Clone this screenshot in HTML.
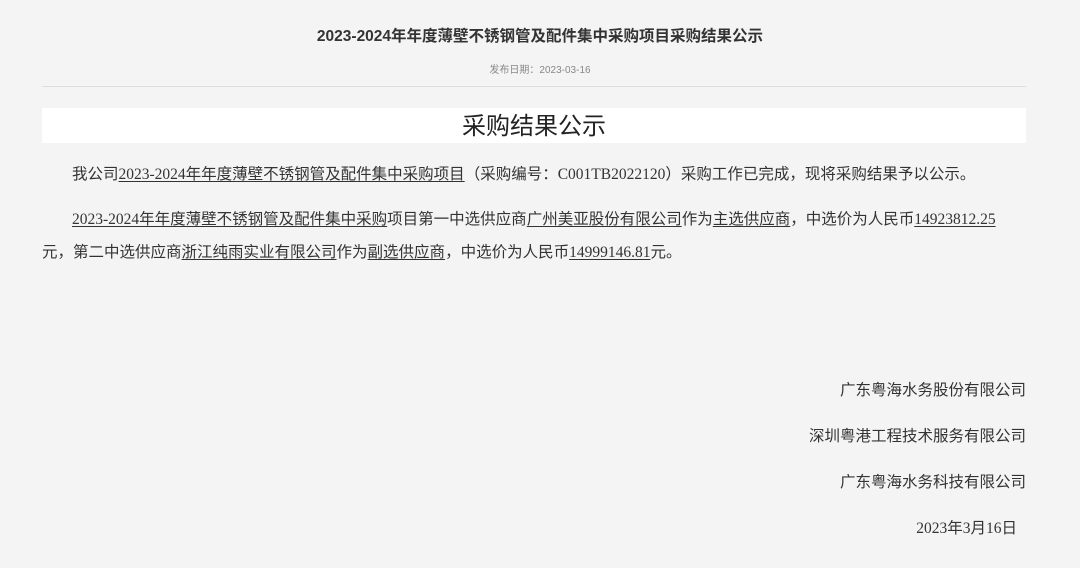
<!DOCTYPE html>
<html><head><meta charset="utf-8"><style>
body{margin:0;background:#f4f4f4;width:1080px;height:568px;overflow:hidden;font-family:"Liberation Serif","Noto Sans CJK SC",serif;color:#333;}
.a{position:absolute;white-space:nowrap;}
u{text-decoration:underline;text-underline-offset:2px;}
.p{font-size:15.5px;line-height:16px;}
</style></head><body>
<div class="a" style="left:0;width:1080px;top:27px;text-align:center;font:bold 15.5px/20px 'Liberation Sans','Noto Sans CJK SC',sans-serif;color:#333">2023-2024年年度薄壁不锈钢管及配件集中采购项目采购结果公示</div>
<div class="a" style="left:0;width:1080px;top:65px;text-align:center;font:10px/12px 'Liberation Sans','Noto Sans CJK SC',sans-serif;color:#888">发布日期：2023-03-16</div>
<div class="a" style="left:42px;width:984px;top:86px;height:1px;background:#ddd"></div>
<div class="a" style="left:42px;width:984px;top:108px;height:35px;background:#fff;text-align:center;font:24px/37px 'Liberation Sans','Noto Sans CJK SC',sans-serif;color:#222">采购结果公示</div>
<div class="a p" style="left:72px;top:167px">我公司<u>2023-2024年年度薄壁不锈钢管及配件集中采购项目</u>（采购编号：C001TB2022120）采购工作已完成，现将采购结果予以公示。</div>
<div class="a p" style="left:72px;top:212px"><u>2023-2024年年度薄壁不锈钢管及配件集中采购</u>项目第一中选供应商<u>广州美亚股份有限公司</u>作为<u>主选供应商</u>，中选价为人民币<u>14923812.25</u></div>
<div class="a p" style="left:42px;top:245px">元，第二中选供应商<u>浙江纯雨实业有限公司</u>作为<u>副选供应商</u>，中选价为人民币<u>14999146.81</u>元。</div>
<div class="a p" style="right:54px;top:383px">广东粤海水务股份有限公司</div>
<div class="a p" style="right:54px;top:429px">深圳粤港工程技术服务有限公司</div>
<div class="a p" style="right:54px;top:475px">广东粤海水务科技有限公司</div>
<div class="a p" style="right:63px;top:521px">2023年3月16日</div>
</body></html>
